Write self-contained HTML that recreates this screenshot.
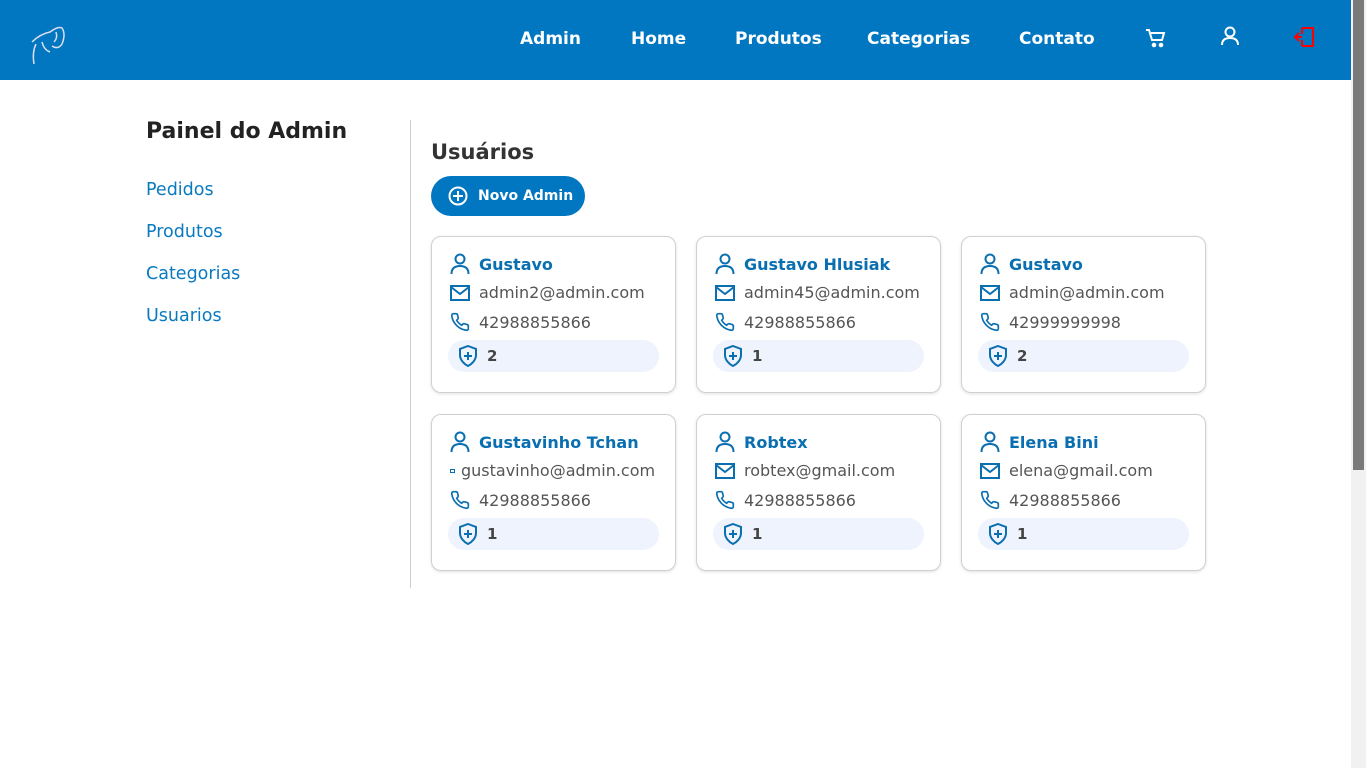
<!DOCTYPE html>
<html><head><meta charset="utf-8"><style>
*{box-sizing:border-box;margin:0;padding:0}
body{width:1366px;height:768px;overflow:hidden;background:#fff;font-family:"DejaVu Sans","Liberation Sans",sans-serif;position:relative}
.nav{position:absolute;left:0;top:0;width:1351px;height:80px;background:#0077c0}
.sb{position:absolute;right:0;top:0;width:15px;height:768px;background:#f1f1f1}
.sb div{position:absolute;left:2px;top:0;width:11px;height:470px;background:#7a7a7a}
.nl{position:absolute;top:29px;color:#fff;font-weight:bold;font-size:17px}
.side h1{position:absolute;left:146px;top:119px;font-size:22px;color:#222;font-weight:bold}
.sl{position:absolute;left:146px;font-size:17.5px;color:#0a7ac0}
.div{position:absolute;left:410px;top:120px;width:1px;height:468px;background:#ccc}
h2{position:absolute;left:431px;top:140px;font-size:21px;font-weight:600;color:#333}
.btn{position:absolute;left:431px;top:176px;width:154px;height:40px;border-radius:20px;background:#0077c0;color:#fff;font-weight:bold;font-size:14px;display:flex;align-items:center;padding-left:17px;gap:10px}
.card{position:absolute;width:245px;height:157px;border:1px solid #d0d0d0;border-radius:10px;box-shadow:0 1px 3px rgba(0,0,0,.12)}
.row{position:absolute;left:18px;display:flex;align-items:center;gap:9px;font-size:16px;color:#555;white-space:nowrap}
.row svg{flex:none}
.nm{color:#0a6fb0;font-weight:bold;font-size:16px}
.pill{position:absolute;left:16px;top:103px;width:211px;height:32px;border-radius:16px;background:#eef3fe;display:flex;align-items:center;padding-left:10px;gap:9px;font-weight:bold;color:#444;font-size:15px}
</style></head><body>
<div class="nav">
<svg style="position:absolute;left:28px;top:22px" width="40" height="44" viewBox="0 0 40 44" fill="none" stroke="#dde" stroke-width="1.5"><path d="M4 20 Q12 12 22 10 Q30 4 34 6 Q38 12 34 22 Q30 28 24 24 M8 22 Q4 30 6 42 M14 20 Q16 28 22 30 M28 10 Q30 16 26 20"/></svg>
<span class="nl" style="left:520px">Admin</span>
<span class="nl" style="left:631px">Home</span>
<span class="nl" style="left:735px">Produtos</span>
<span class="nl" style="left:867px">Categorias</span>
<span class="nl" style="left:1019px">Contato</span>
<svg style="position:absolute;left:1145px;top:28px" width="22" height="20" viewBox="0 0 22 20" fill="none" stroke="#fff" stroke-width="2"><path d="M1 2h3l3 10h10l2-7H6"/><circle cx="9" cy="17" r="1.3" fill="#fff"/><circle cx="16" cy="17" r="1.3" fill="#fff"/></svg>
<svg style="position:absolute;left:1220px;top:26px" width="20" height="20" viewBox="0 0 20 20" fill="none" stroke="#fff" stroke-width="2"><circle cx="10" cy="6" r="4.5"/><path d="M2 19q0-7 8-7t8 7"/></svg>
<svg style="position:absolute;left:1294px;top:26px" width="22" height="22" viewBox="0 0 22 22" fill="none" stroke="#f00" stroke-width="2"><path d="M8 2h11v18H8M8 11h-7M5 7l-4 4 4 4M8 8v-6M8 14v6"/></svg>
</div>
<div class="sb"><div></div></div>
<div class="side"><h1>Painel do Admin</h1></div>
<span class="sl" style="top:180px">Pedidos</span>
<span class="sl" style="top:222px">Produtos</span>
<span class="sl" style="top:264px">Categorias</span>
<span class="sl" style="top:306px">Usuarios</span>
<div class="div"></div>
<h2>Usuários</h2>
<div class="btn"><svg width="20" height="20" viewBox="0 0 20 20" fill="none" stroke="#fff" stroke-width="2"><circle cx="10" cy="10" r="8.5"/><path d="M10 5v10M5 10h10"/></svg>Novo Admin</div>
<div id="cards"></div>
<script>
const d=[["Gustavo","admin2@admin.com","42988855866","2"],["Gustavo Hlusiak","admin45@admin.com","42988855866","1"],["Gustavo","admin@admin.com","42999999998","2"],["Gustavinho Tchan","gustavinho@admin.com","42988855866","1"],["Robtex","robtex@gmail.com","42988855866","1"],["Elena Bini","elena@gmail.com","42988855866","1"]];
const U='<svg width="20" height="22" viewBox="0 0 20 22" fill="none" stroke="#0a6fb0" stroke-width="2"><circle cx="10" cy="6" r="4.5"/><path d="M1.5 21q0-8 8.5-8t8.5 8"/></svg>';
const M='<svg width="20" height="16" viewBox="0 0 20 16" fill="none" stroke="#0a6fb0" stroke-width="2"><rect x="1" y="1" width="18" height="14"/><path d="M1 2l9 7 9-7"/></svg>';
const P='<svg width="20" height="20" viewBox="0 0 24 24" fill="none" stroke="#0a6fb0" stroke-width="2"><path d="M22 16.9v3a2 2 0 0 1-2.2 2 19.8 19.8 0 0 1-8.6-3.1 19.5 19.5 0 0 1-6-6A19.8 19.8 0 0 1 2.1 4.2 2 2 0 0 1 4.1 2h3a2 2 0 0 1 2 1.7c.1 1 .4 1.9.7 2.8a2 2 0 0 1-.5 2.1L8 9.9a16 16 0 0 0 6 6l1.3-1.3a2 2 0 0 1 2.1-.4c.9.3 1.8.6 2.8.7a2 2 0 0 1 1.7 2z"/></svg>';
const S='<svg width="20" height="22" viewBox="0 0 20 22" fill="none" stroke="#0a6fb0" stroke-width="2"><path d="M10 1l8 3v6c0 5-4 9-8 11-4-2-8-6-8-11V4z"/><path d="M10 7v8M6 11h8"/></svg>';
let h='';d.forEach((c,i)=>{const x=431+(i%3)*265,y=236+Math.floor(i/3)*178;
const mi=i==3?'<span style="display:inline-block;width:5px;height:4px;border:1px solid #0a6fb0;margin-right:-3px"></span>':M;
h+=`<div class="card" style="left:${x}px;top:${y}px"><div class="row" style="top:16px">${U}<span class="nm">${c[0]}</span></div><div class="row" style="top:46px">${mi}<span>${c[1]}</span></div><div class="row" style="top:75px">${P}<span>${c[2]}</span></div><div class="pill">${S}${c[3]}</div></div>`});
document.getElementById('cards').innerHTML=h;
</script>
</body></html>
